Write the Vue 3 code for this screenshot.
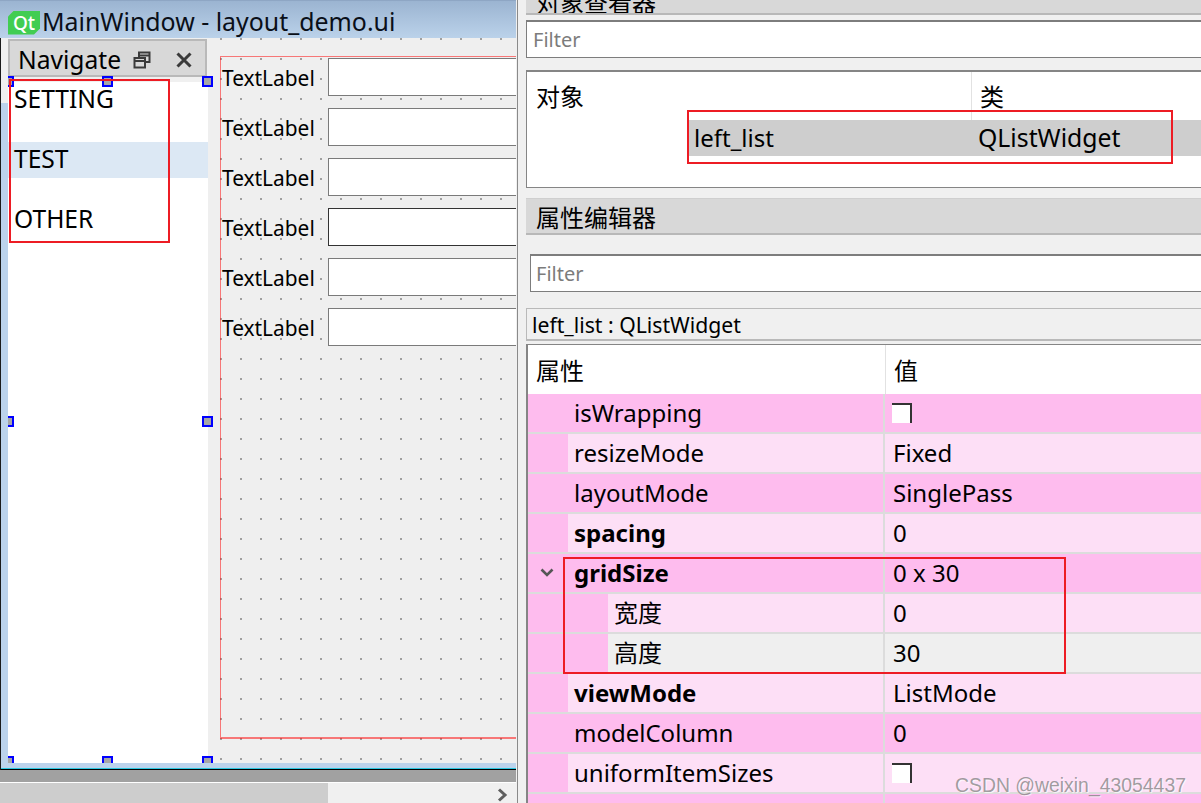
<script setup>
const items = [
  { text: 'SETTING', hot: false },
  { text: 'TEST', hot: true },
  { text: 'OTHER', hot: false },
]
const formRows = [
  { id: 1, strong: false },
  { id: 2, strong: false },
  { id: 3, strong: false },
  { id: 4, strong: true },
  { id: 5, strong: false },
  { id: 6, strong: false },
]
const handles = ['h-a', 'h-b', 'h-c', 'h-d', 'h-e', 'h-f', 'h-g', 'h-h']
const props = [
  { name: 'isWrapping', check: true, tone: 'dark' },
  { name: 'resizeMode', value: 'Fixed', tone: 'light' },
  { name: 'layoutMode', value: 'SinglePass', tone: 'dark' },
  { name: 'spacing', value: '0', tone: 'light', bold: true },
  { name: 'gridSize', value: '0 x 30', tone: 'dark', bold: true, open: true },
  { name: '宽度', value: '0', tone: 'light', sub: true },
  { name: '高度', value: '30', tone: 'grey', sub: true },
  { name: 'viewMode', value: 'ListMode', tone: 'light', bold: true },
  { name: 'modelColumn', value: '0', tone: 'dark' },
  { name: 'uniformItemSizes', check: true, tone: 'light' },
  { name: '', value: '', tone: 'dark' },
]
</script>

<template>
  <div class="shot">
    <section class="designer">
      <header class="titlebar">
        <span class="qt-logo">Qt</span>
        <span class="title-text">MainWindow - layout_demo.ui</span>
      </header>

      <div class="client">
        <aside class="dock">
          <div class="dock-title">
            <span class="dock-name">Navigate</span>
            <svg class="dock-float" width="18" height="18" viewBox="0 0 18 18" fill="none" stroke="#3a3a3a" stroke-width="2">
              <rect x="6" y="1.5" width="10.5" height="9.5" />
              <path d="M6 4.5h10" />
              <rect x="1.5" y="7" width="10.5" height="9.5" fill="#d8d8d8" />
              <path d="M1.5 10h10" />
            </svg>
            <svg class="dock-close" width="18" height="18" viewBox="0 0 18 18" fill="none" stroke="#3a3a3a" stroke-width="3">
              <path d="M2.5 2.5l13 13M15.5 2.5l-13 13" />
            </svg>
          </div>
          <div class="dock-gap"></div>
          <ul class="nav-list">
            <li v-for="item in items" :key="item.text" class="nav-item" :class="{ hot: item.hot }">{{ item.text }}</li>
          </ul>
          <i v-for="h in handles" :key="h" class="handle" :class="h"></i>
          <div class="mark mark-nav"></div>
        </aside>

        <main class="canvas">
          <div class="layout-box">
            <div v-for="row in formRows" :key="row.id" class="form-row">
              <span class="form-label">TextLabel</span>
              <span class="form-input" :class="{ strong: row.strong }"></span>
            </div>
          </div>
        </main>
      </div>

      <div class="client-foot"></div>
      <div class="grey-band"></div>
      <div class="hscroll">
        <div class="hthumb"></div>
        <svg class="harrow" width="12" height="14" viewBox="0 0 12 14" fill="none" stroke="#5f5f5f" stroke-width="3">
          <path d="M2 1.5l6 5.5-6 5.5" />
        </svg>
      </div>
    </section>

    <section class="side">
      <div class="pane-head pane-head-cut"><span>对象查看器</span></div>
      <div class="filter first"><span>Filter</span></div>

      <div class="object-tree">
        <div class="object-head">
          <span class="object-col-a">对象</span>
          <span class="object-col-b">类</span>
        </div>
        <div class="object-row">
          <span class="object-name">left_list</span>
          <span class="object-class">QListWidget</span>
        </div>
        <div class="mark mark-object"></div>
      </div>

      <div class="pane-head second"><span>属性编辑器</span></div>
      <div class="filter sec"><span>Filter</span></div>
      <div class="class-label">left_list : QListWidget</div>

      <div class="prop-tree">
        <div class="prop-head">
          <span class="prop-head-a">属性</span>
          <span class="prop-head-b">值</span>
        </div>
        <div v-for="(p, i) in props" :key="i" class="prop-row" :class="p.tone">
          <div class="prop-gutter" :class="{ deep: p.sub }">
            <svg v-if="p.open" width="14" height="10" viewBox="0 0 14 10" fill="none" stroke="#555" stroke-width="2.6">
              <path d="M1.5 1.5L7 7l5.5-5.5" />
            </svg>
          </div>
          <div class="prop-name" :class="{ bold: p.bold, deep: p.sub }">{{ p.name }}</div>
          <div class="prop-value">
            <span v-if="p.check" class="check"></span>
            <template v-else>{{ p.value }}</template>
          </div>
        </div>
        <div class="mark mark-grid"></div>
      </div>
    </section>

    <div class="watermark">CSDN @weixin_43054437</div>
  </div>
</template>

<style scoped>
.shot {
  position: relative;
  display: flex;
  width: 1201px;
  height: 803px;
  overflow: hidden;
  background: #f0f0f0;
  color: #000;
  font-family: "Noto Sans", "Noto Sans CJK SC", sans-serif;
  font-size: 24px;
}
.designer {
  display: flex;
  flex-direction: column;
  width: 517px;
  flex: none;
  padding-right: 1px;
  box-sizing: border-box;
}
.titlebar {
  display: flex;
  align-items: center;
  height: 38px;
  flex: none;
  padding: 0 0 0 8px;
  box-sizing: border-box;
  background: linear-gradient(#9bb4d1, #bbd2ea);
  border-top: 1px solid #8ea6c4;
}
.qt-logo {
  display: flex;
  align-items: center;
  justify-content: center;
  width: 32px;
  height: 24px;
  margin-top: 6px;
  flex: none;
  background: #41cd52;
  color: #fff;
  font-size: 19px;
  font-weight: 500;
  clip-path: polygon(6px 0, 100% 0, 100% 18px, 26px 100%, 0 100%, 0 6px);
}
.title-text {
  margin: 2px 0 0 2px;
  font-size: 24.9px;
  line-height: 32px;
  white-space: nowrap;
  color: #0a0f18;
}
.client {
  display: flex;
  height: 725px;
  flex: none;
  padding-left: 8px;
  background: linear-gradient(#f0f0f0 65px, #bcd3ec 65px);
  border-left: 1px solid #1b1b1b;
  box-sizing: border-box;
}
.dock {
  position: relative;
  display: flex;
  flex-direction: column;
  width: 199px;
  flex: none;
  margin-left: -1px;
}
.dock-title {
  display: flex;
  align-items: center;
  height: 38px;
  margin-top: 1px;
  box-sizing: border-box;
  background: #d8d8d8;
  border: 2px solid #b9b9b9;
  width: 199px;
  flex: none;
  padding-top: 3px;
}
.dock-name {
  margin-left: 8px;
  font-size: 24.6px;
  line-height: 30px;
  width: 115px;
  white-space: nowrap;
}
.dock-close { margin-left: 24px; }
.dock-gap {
  height: 5px;
  flex: none;
  background: #f0f0f0;
}
.nav-list {
  flex: 1;
  list-style: none;
  margin: 0;
  padding: 0;
  width: 200px;
  background: #fff;
}
.nav-item {
  height: 36px;
  margin-bottom: 24px;
  padding-left: 6px;
  font-size: 24.6px;
  line-height: 33px;
}
.nav-item.hot { background: #dce8f4; }
.handle {
  position: absolute;
  width: 11px;
  height: 11px;
  box-sizing: border-box;
  background: #a6a6a6;
  border: 2px solid #0000ff;
}
.h-a { left: -5px; top: 38px; clip-path: inset(0 0 0 5px); }
.h-b { left: 94px; top: 38px; }
.h-c { left: 194px; top: 38px; }
.h-d { left: -5px; top: 378px; clip-path: inset(0 0 0 5px); }
.h-e { left: 194px; top: 378px; }
.h-f { left: -5px; top: 718px; clip-path: inset(0 0 4px 5px); }
.h-g { left: 94px; top: 718px; clip-path: inset(0 0 4px 0); }
.h-h { left: 194px; top: 718px; clip-path: inset(0 0 4px 0); }
.mark {
  position: absolute;
  box-sizing: border-box;
  border: 2px solid #ed1c24;
  pointer-events: none;
}
.mark-nav {
  left: 1px;
  top: 41px;
  width: 161px;
  height: 164px;
}
.canvas {
  flex: 1;
  min-width: 0;
  overflow: hidden;
  padding: 18px 0 0 12px;
  margin-left: 1px;
  background-color: #efefef;
  background-image: radial-gradient(circle at 1px 1px, #a0a0a0 1.2px, transparent 1.3px);
  background-size: 20px 20px;
  background-position: 12px 0;
}
.layout-box {
  width: 320px;
  height: 683px;
  box-sizing: border-box;
  padding: 1px 0 0 1px;
  border: 1px solid rgba(255, 0, 0, 0.5);
  border-bottom-width: 2px;
}
.form-row {
  display: flex;
  align-items: center;
  height: 38px;
  margin-bottom: 12px;
}
.form-label {
  width: 106px;
  flex: none;
  padding-top: 2px;
  font-size: 20.9px;
  white-space: nowrap;
}
.form-input {
  width: 200px;
  height: 38px;
  flex: none;
  box-sizing: border-box;
  background: #fff;
  border: 1px solid #7a7a7a;
}
.form-input.strong { border-color: #333; }
.client-foot {
  height: 7px;
  flex: none;
  background: linear-gradient(#bcd3ec 5px, #2cc6e0 5px, #2cc6e0 6px, #000 6px);
  border-left: 1px solid #1b1b1b;
}
.grey-band {
  height: 13px;
  flex: none;
  box-sizing: border-box;
  background: #a1a1a1;
  border-bottom: 1px solid #fff;
}
.hscroll {
  position: relative;
  flex: 1;
  background: #f0f0f0;
}
.hthumb {
  width: 328px;
  height: 100%;
  background: #cdcdcd;
}
.harrow {
  position: absolute;
  left: 497px;
  top: 5px;
}
.side {
  display: flex;
  flex-direction: column;
  flex: 1;
  min-width: 0;
  padding-left: 8px;
  border-left: 1px solid #8a8a8a;
  box-sizing: border-box;
}
.pane-head {
  display: flex;
  align-items: center;
  flex: none;
  height: 37px;
  padding-left: 10px;
  box-sizing: border-box;
  background: #d8d8d8;
  border-top: 1px solid #cfcfcf;
  border-bottom: 2px solid #b8b8b8;
  font-size: 24px;
  font-family: "Noto Sans CJK SC", sans-serif;
}
.pane-head-cut {
  height: 15px;
  align-items: flex-end;
  overflow: hidden;
  border-top: 0;
}
.pane-head-cut span {
  line-height: 36px;
  display: block;
  margin-bottom: -7px;
}
.pane-head.second { margin-top: 10px; }
.filter {
  display: flex;
  align-items: center;
  flex: none;
  height: 38px;
  padding-left: 6px;
  box-sizing: border-box;
  background: #fff;
  border: 1px solid #7d7d7d;
  border-width: 2px 0 1px 1px;
  color: #7c7c7c;
  font-size: 20px;
}
.filter.first { margin-top: 5px; }
.filter.sec {
  margin: 19px 0 0 4px;
  padding-left: 5px;
}
.object-tree {
  position: relative;
  flex: none;
  height: 118px;
  margin-top: 12px;
  box-sizing: border-box;
  background: #fff;
  border: 1px solid #858585;
  border-right: 0;
  border-top-width: 2px;
}
.object-head {
  display: flex;
  height: 48px;
  font-family: "Noto Sans CJK SC", sans-serif;
}
.object-col-a {
  width: 444px;
  padding: 6px 0 0 9px;
  box-sizing: border-box;
  flex: none;
  line-height: 36px;
}
.object-col-b {
  padding: 6px 0 0 8px;
  line-height: 36px;
  border-left: 1px solid #e2e2e2;
  flex: 1;
}
.object-row {
  display: flex;
  align-items: center;
  height: 36px;
  margin-left: 161px;
  padding-bottom: 2px;
  box-sizing: border-box;
  background: #cecece;
}
.object-name {
  width: 290px;
  padding-left: 6px;
  box-sizing: border-box;
  flex: none;
}
.object-class {
  white-space: nowrap;
  font-size: 24.8px;
}
.mark-object {
  left: 160px;
  top: 38px;
  width: 486px;
  height: 54px;
}
.class-label {
  display: flex;
  align-items: center;
  flex: none;
  height: 33px;
  margin-top: 16px;
  padding-left: 5px;
  box-sizing: border-box;
  background: #f0f0f0;
  border: 1px solid #b9b9b9;
  border-width: 1px 0 2px 1px;
  font-size: 21.2px;
}
.prop-tree {
  position: relative;
  flex: 1;
  margin-top: 3px;
  overflow: hidden;
  background: #fff;
  border-top: 1px solid #858585;
  border-left: 2px solid #858585;
}
.prop-head {
  display: flex;
  height: 49px;
  font-family: "Noto Sans CJK SC", sans-serif;
  line-height: 50px;
}
.prop-head-a {
  width: 357px;
  padding-left: 8px;
  box-sizing: border-box;
  flex: none;
}
.prop-head-b {
  padding-left: 8px;
  border-left: 1px solid #e2e2e2;
  flex: 1;
}
.prop-row {
  display: flex;
  height: 40px;
  box-sizing: border-box;
  border-bottom: 2px solid #dcdcdc;
}
.prop-gutter {
  display: flex;
  align-items: center;
  justify-content: center;
  width: 40px;
  flex: none;
  background: #febcee;
  padding-right: 2px;
  box-sizing: border-box;
}
.prop-gutter.deep { width: 80px; }
.prop-name {
  display: flex;
  align-items: center;
  width: 315px;
  flex: none;
  padding: 0 0 2px 6px;
  box-sizing: border-box;
  white-space: nowrap;
}
.prop-name.deep {
  width: 275px;
  padding: 0 0 4px 6px;
  font-family: "Noto Sans CJK SC", sans-serif;
}
.prop-name.bold { font-weight: 700; }
.prop-value {
  display: flex;
  align-items: center;
  flex: 1;
  padding: 0 0 2px 8px;
  border-left: 2px solid #dcdcdc;
  white-space: nowrap;
}
.dark .prop-name, .dark .prop-value { background: #febcee; }
.light .prop-name, .light .prop-value { background: #fddff6; }
.grey .prop-name, .grey .prop-value { background: #efefef; }
.check {
  width: 20px;
  height: 20px;
  box-sizing: border-box;
  margin: 2px 0 0 -1px;
  background: #fff;
  border-top: 2px solid #333;
  border-right: 2px solid #333;
}
.mark-grid {
  left: 35px;
  top: 212px;
  width: 503px;
  height: 117px;
}
.watermark {
  position: absolute;
  left: 955px;
  top: 771px;
  color: rgba(120, 120, 120, 0.7);
  text-shadow: 1px 1px 1px rgba(255, 255, 255, 0.8);
  font-family: "Liberation Sans", sans-serif;
  font-size: 19.4px;
  line-height: 28px;
  white-space: nowrap;
}
</style>
